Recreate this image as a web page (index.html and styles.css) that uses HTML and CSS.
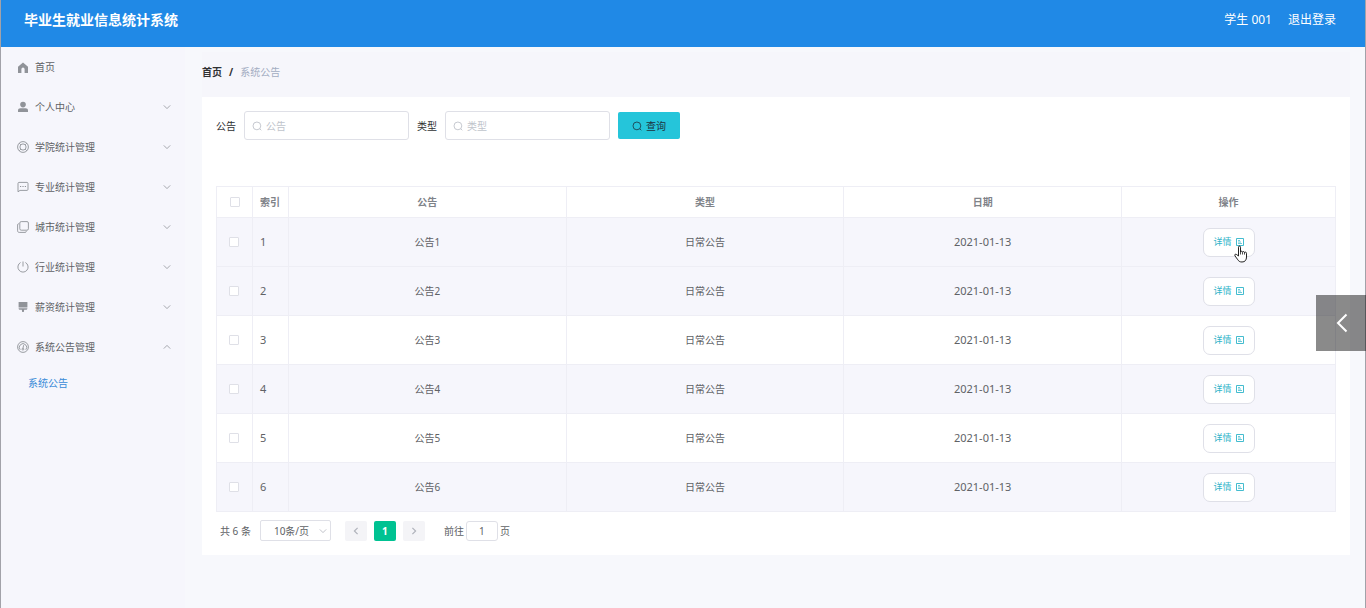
FILE: index.html
```html
<!DOCTYPE html>
<html lang="zh-CN">
<head>
<meta charset="utf-8">
<meta name="viewport" content="width=device-width, initial-scale=1">
<title>毕业生就业信息统计系统</title>
<link rel="stylesheet" href="styles.css">
</head>
<body>
<svg class="sprite" aria-hidden="true">
  <symbol id="i-home" viewBox="0 0 12 12"><path d="M6 1.500 1 5.800V12h3.400V8.200a1.600 1.600 0 0 1 3.200 0V12H11V5.800z" fill="currentColor"/></symbol>
  <symbol id="i-user" viewBox="0 0 12 12"><circle cx="6" cy="3.6" r="2.8" fill="currentColor"/><path d="M1 11V9.6C1 8 2 7.2 3.4 7.2h5.2C10 7.2 11 8 11 9.6V11z" fill="currentColor"/></symbol>
  <symbol id="i-help" viewBox="0 0 12 12"><g fill="none" stroke="currentColor" stroke-width=".9"><circle cx="6" cy="6" r="5.4"/><circle cx="6" cy="6" r="3.1"/><path d="m2.2 2.2 1.6 1.6M9.8 2.2 8.2 3.8M2.2 9.8l1.6-1.6m6 1.6L8.2 8.2"/></g></symbol>
  <symbol id="i-chat" viewBox="0 0 12 12"><path d="M1 10.8V2.4c0-.6.4-1 1-1h8c.6 0 1 .4 1 1v6c0 .6-.4 1-1 1H3z" fill="none" stroke="currentColor" stroke-width=".9"/><path d="M3 5h1.2v1.1H3zm2.4 0h1.2v1.1H5.4zm2.4 0H9v1.1H7.8z" fill="currentColor"/></symbol>
  <symbol id="i-copy" viewBox="0 0 12 12"><g fill="none" stroke="currentColor" stroke-width=".9"><rect x="2.8" y=".6" width="8.6" height="8.6" rx="1.4"/><path d="M1.8 2.6C1 2.7.6 3.2.6 4v5.8c0 1 .6 1.600 1.600 1.600H8c.8 0 1.300-.4 1.400-1.200"/></g></symbol>
  <symbol id="i-power" viewBox="0 0 12 12"><path d="M3.600 1.500a5.100 5.100 0 1 0 4.800 0M6 .5v5" fill="none" stroke="currentColor" stroke-width=".9"/></symbol>
  <symbol id="i-brush" viewBox="0 0 12 12"><path d="M1.600 1h8.800v5.600H1.600zM1.600 7.200h8.800c0 1-.6 1.600-1.600 1.600H7.200L6.800 11H5.200l-.4-2.200H3.200c-1 0-1.600-.6-1.600-1.600z" fill="currentColor"/></symbol>
  <symbol id="i-gauge" viewBox="0 0 12 12"><g fill="none" stroke="currentColor" stroke-width=".9"><circle cx="6" cy="6" r="5.400"/><path d="M3.200 8.800a3.700 3.700 0 1 1 5.600 0M6.600 4.200 6 7.200"/><circle cx="5.900" cy="8.200" r=".9"/></g></symbol>
  <symbol id="i-down" viewBox="0 0 8 8"><path d="m.8 2.400 3.200 3.200 3.200-3.200" fill="none" stroke="currentColor" stroke-width=".8"/></symbol>
  <symbol id="i-up" viewBox="0 0 8 8"><path d="m.8 5.600 3.200-3.200 3.200 3.200" fill="none" stroke="currentColor" stroke-width=".8"/></symbol>
  <symbol id="i-left" viewBox="0 0 8 8"><path d="M5.600.8 2.400 4l3.200 3.200" fill="none" stroke="currentColor" stroke-width="1.200"/></symbol>
  <symbol id="i-right" viewBox="0 0 8 8"><path d="M2.400.8 5.600 4 2.400 7.200" fill="none" stroke="currentColor" stroke-width="1.200"/></symbol>
  <symbol id="i-search" viewBox="0 0 10 10"><path d="M7.800 7.800 9.300 9.300M8.800 4.900a3.900 3.900 0 1 1-7.800 0 3.900 3.900 0 0 1 7.800 0z" fill="none" stroke="currentColor" stroke-width=".8"/></symbol>
  <symbol id="i-doc" viewBox="0 0 8 8"><path d="M.5.5h7v7h-7z" fill="none" stroke="currentColor" stroke-width=".9"/><path d="M2 2.500h2M2 4h3M2 5.500h4" fill="none" stroke="currentColor" stroke-width=".7"/></symbol>
</svg>

<header class="topbar">
  <h1 class="brand">毕业生就业信息统计系统</h1>
  <div class="account"><span>学生 001</span><a class="logout" href="#">退出登录</a></div>
</header>

<div class="shell">
  <nav class="sidebar">
    <a class="menu-item" href="#"><svg class="menu-icon"><use href="#i-home"/></svg><span>首页</span></a>
    <button class="menu-item"><svg class="menu-icon"><use href="#i-user"/></svg><span>个人中心</span><svg class="arrow"><use href="#i-down"/></svg></button>
    <button class="menu-item"><svg class="menu-icon"><use href="#i-help"/></svg><span>学院统计管理</span><svg class="arrow"><use href="#i-down"/></svg></button>
    <button class="menu-item"><svg class="menu-icon"><use href="#i-chat"/></svg><span>专业统计管理</span><svg class="arrow"><use href="#i-down"/></svg></button>
    <button class="menu-item"><svg class="menu-icon"><use href="#i-copy"/></svg><span>城市统计管理</span><svg class="arrow"><use href="#i-down"/></svg></button>
    <button class="menu-item"><svg class="menu-icon"><use href="#i-power"/></svg><span>行业统计管理</span><svg class="arrow"><use href="#i-down"/></svg></button>
    <button class="menu-item"><svg class="menu-icon"><use href="#i-brush"/></svg><span>薪资统计管理</span><svg class="arrow"><use href="#i-down"/></svg></button>
    <button class="menu-item" aria-expanded="true"><svg class="menu-icon"><use href="#i-gauge"/></svg><span>系统公告管理</span><svg class="arrow"><use href="#i-up"/></svg></button>
    <a class="submenu-item" href="#">系统公告</a>
  </nav>

  <main class="content">
    <div class="breadcrumb"><a class="crumb-home" href="#">首页</a><span class="crumb-sep">/</span><span class="crumb-current">系统公告</span></div>

    <section class="panel">
      <form class="filters">
        <label for="f-notice">公告</label>
        <div class="field"><svg class="search-icon"><use href="#i-search"/></svg><input class="field-input" id="f-notice" type="text" placeholder="公告"></div>
        <label for="f-type">类型</label>
        <div class="field"><svg class="search-icon"><use href="#i-search"/></svg><input class="field-input" id="f-type" type="text" placeholder="类型"></div>
        <button class="query" type="button"><svg class="search-icon"><use href="#i-search"/></svg>查询</button>
      </form>

      <table class="grid">
        <colgroup><col class="col-small"><col class="col-small"><col class="col-wide"><col class="col-wide"><col class="col-wide"><col class="col-action"></colgroup>
        <thead>
          <tr><th><input class="check" type="checkbox" aria-label="全选"></th><th class="index">索引</th><th>公告</th><th>类型</th><th>日期</th><th>操作</th></tr>
        </thead>
        <tbody>
          <tr class="shaded"><td class="pick"><input class="check" type="checkbox" aria-label="选择 1"></td><td class="index">1</td><td>公告1</td><td>日常公告</td><td class="date">2021-01-13</td><td class="action"><button class="detail">详情<svg class="doc-icon"><use href="#i-doc"/></svg></button><svg class="pointer" viewBox="0 0 14 18" aria-hidden="true"><path d="M4.500 11V2.200c0-1.600 2-1.600 2 0V7c.3-1.200 2-1 2 .2.400-1 2-.8 2 .4.500-.8 2-.6 2 .7V12c0 3-1.500 5-4.500 5-2.400 0-3.500-1-4.600-2.800L1 10.900c-.9-1.500.8-2.300 1.700-1.300z" fill="#fff" stroke="#222" stroke-width="1"/><path d="M6.500 7v2.500m2-2.300v2.300m2-1.900v2" stroke="#222" stroke-width=".8"/></svg></td></tr>
          <tr class="shaded"><td class="pick"><input class="check" type="checkbox" aria-label="选择 2"></td><td class="index">2</td><td>公告2</td><td>日常公告</td><td class="date">2021-01-13</td><td class="action"><button class="detail">详情<svg class="doc-icon"><use href="#i-doc"/></svg></button></td></tr>
          <tr><td class="pick"><input class="check" type="checkbox" aria-label="选择 3"></td><td class="index">3</td><td>公告3</td><td>日常公告</td><td class="date">2021-01-13</td><td class="action"><button class="detail">详情<svg class="doc-icon"><use href="#i-doc"/></svg></button></td></tr>
          <tr class="shaded"><td class="pick"><input class="check" type="checkbox" aria-label="选择 4"></td><td class="index">4</td><td>公告4</td><td>日常公告</td><td class="date">2021-01-13</td><td class="action"><button class="detail">详情<svg class="doc-icon"><use href="#i-doc"/></svg></button></td></tr>
          <tr><td class="pick"><input class="check" type="checkbox" aria-label="选择 5"></td><td class="index">5</td><td>公告5</td><td>日常公告</td><td class="date">2021-01-13</td><td class="action"><button class="detail">详情<svg class="doc-icon"><use href="#i-doc"/></svg></button></td></tr>
          <tr class="shaded"><td class="pick"><input class="check" type="checkbox" aria-label="选择 6"></td><td class="index">6</td><td>公告6</td><td>日常公告</td><td class="date">2021-01-13</td><td class="action"><button class="detail">详情<svg class="doc-icon"><use href="#i-doc"/></svg></button></td></tr>
        </tbody>
      </table>

      <div class="pager">
        <span>共 6 条</span>
        <div class="size"><select class="size-select" aria-label="每页条数"><option>10条/页</option></select><svg class="size-arrow"><use href="#i-down"/></svg></div>
        <div class="pages">
          <button class="page" disabled aria-label="上一页"><svg class="page-arrow"><use href="#i-left"/></svg></button>
          <button class="page current">1</button>
          <button class="page" disabled aria-label="下一页"><svg class="page-arrow"><use href="#i-right"/></svg></button>
        </div>
        <label class="jump">前往<input class="jump-input" type="text" value="1">页</label>
      </div>
    </section>
  </main>
</div>

<button class="drawer" aria-label="展开"><svg class="drawer-icon" viewBox="0 0 12 20"><path d="M10.500 1.500 2 10l8.500 8.500" fill="none" stroke="currentColor" stroke-width="2"/></svg></button>
</body>
</html>
```
FILE: styles.css
```css
* { box-sizing: border-box; }

body {
  margin: 0;
  min-height: 100vh;
  display: flex;
  flex-direction: column;
  background: #f7f8fc;
  border: solid #a2a2a9;
  border-width: 0 1px;
  color: #606266;
  font: 10px/16px "Noto Sans", "Noto Sans CJK SC", sans-serif;
}

a { color: inherit; text-decoration: none; }
button, input, select { font: inherit; color: inherit; margin: 0; }
button { cursor: pointer; }
svg { display: block; flex: none; }
.sprite { position: absolute; width: 0; height: 0; }

.topbar {
  height: 47px;
  margin: 0 -1px;
  padding: 0 29px 8px 23px;
  display: flex;
  align-items: center;
  justify-content: space-between;
  background: #2089e6;
  border: solid #1b6fb9;
  border-width: 0 1px;
  color: #fff;
}
.brand { margin: 0; font-size: 14px; line-height: 20px; font-weight: 700; }
.account { display: flex; gap: 16px; font-size: 12px; }

.shell { flex: 1; display: flex; }

.sidebar { width: 184px; flex: none; background: #f6f6fc; }
.menu-item {
  width: 100%;
  height: 40px;
  padding: 0 14px 0 16px;
  display: flex;
  align-items: center;
  gap: 6px;
  border: 0;
  background: none;
  text-align: left;
}
.menu-icon { width: 12px; height: 12px; color: #909399; }
.arrow { width: 8px; height: 8px; margin-left: auto; color: #909399; }
.submenu-item { display: block; padding: 8px 27px; color: #3a8bd8; }

.content { flex: 1; min-width: 0; padding: 5px 15px 0 17px; }
.breadcrumb {
  height: 45px;
  padding-bottom: 5px;
  display: flex;
  align-items: center;
  background: #f6f6fb;
}
.crumb-home, .crumb-sep { color: #303133; font-weight: 700; }
.crumb-sep { margin: 0 7px; }
.crumb-current { color: #a3adc2; }

.panel { padding: 14px; background: #fff; }

.filters { display: flex; align-items: center; gap: 8px; color: #303133; }
.field {
  width: 165px;
  height: 29px;
  padding: 0 7px;
  display: flex;
  align-items: center;
  gap: 4px;
  border: 1px solid #dfe0e7;
  border-radius: 3px;
}
.search-icon { width: 10px; height: 10px; }
.field .search-icon { color: #b8bbc4; }
.field-input { width: 100%; min-width: 0; padding: 0; border: 0; outline: 0; background: none; }
.field-input::placeholder { color: #c0c4cc; }
.query {
  width: 62px;
  height: 27px;
  padding: 0;
  display: flex;
  align-items: center;
  justify-content: center;
  gap: 4px;
  border: 0;
  border-radius: 2px;
  background: #25c5da;
  color: #1d3340;
}

.grid {
  width: 100%;
  margin-top: 46px;
  table-layout: fixed;
  border-collapse: collapse;
  text-align: center;
}
.col-small { width: 36px; }
.col-action { width: 214px; }
.grid th, .grid td { padding: 0; border: 1px solid #eeeef5; }
.grid th { height: 31px; color: #808389; font-weight: 700; }
.grid td { height: 49px; }
.shaded { background: #f6f6fc; }
.grid .index { padding-left: 7px; text-align: left; }
.grid .date, .grid td.index { font-size: 11px; }
.check {
  appearance: none;
  width: 10px;
  height: 10px;
  display: block;
  margin: 0 auto;
  border: 1px solid #dfe0e7;
  border-radius: 1px;
  background: #fff;
}
.grid .pick { padding-right: 2px; }
.action { position: relative; }
.detail {
  width: 52px;
  height: 29px;
  margin: 0 auto;
  padding: 0;
  display: flex;
  align-items: center;
  justify-content: center;
  gap: 4px;
  border: 1px solid #dfe0e8;
  border-radius: 7px;
  background: #fff;
  color: #2fb4c9;
  font-size: 9px;
}
.doc-icon { width: 8px; height: 8px; }
.pointer { position: absolute; left: 50%; top: 50%; width: 14px; height: 18px; margin: 3px 0 0 5px; }

.pager { display: flex; align-items: center; padding: 8px 4px 0; }
.size { width: 71px; height: 21px; margin-left: 9px; display: grid; align-items: center; }
.size-select, .size-arrow { grid-area: 1 / 1; }
.size-select {
  appearance: none;
  width: 100%;
  height: 21px;
  padding: 0 13px;
  border: 1px solid #dfe0e7;
  border-radius: 2px;
  background: #fff;
}
.size-arrow { width: 8px; height: 8px; margin-right: 4px; justify-self: end; color: #b0b3bb; pointer-events: none; }
.pages { display: flex; gap: 7px; margin: 0 19px 0 14px; }
.page {
  width: 22px;
  height: 20px;
  padding: 0;
  display: flex;
  align-items: center;
  justify-content: center;
  border: 0;
  border-radius: 2px;
  background: #f4f4f7;
  color: #b0b3bb;
}
.page.current { background: #00c292; color: #fff; font-weight: 700; }
.page-arrow { width: 8px; height: 8px; }
.jump { display: flex; align-items: center; gap: 2px; }
.jump-input {
  width: 32px;
  height: 20px;
  padding: 0;
  border: 1px solid #dfe0e7;
  border-radius: 3px;
  background: #fff;
  text-align: center;
}

.drawer {
  position: fixed;
  right: 0;
  top: 295px;
  width: 50px;
  height: 56px;
  padding: 0 0 0 20px;
  border: 0;
  background: rgba(0, 0, 0, .46);
  color: #fff;
}
.drawer-icon { width: 12px; height: 20px; }
```
